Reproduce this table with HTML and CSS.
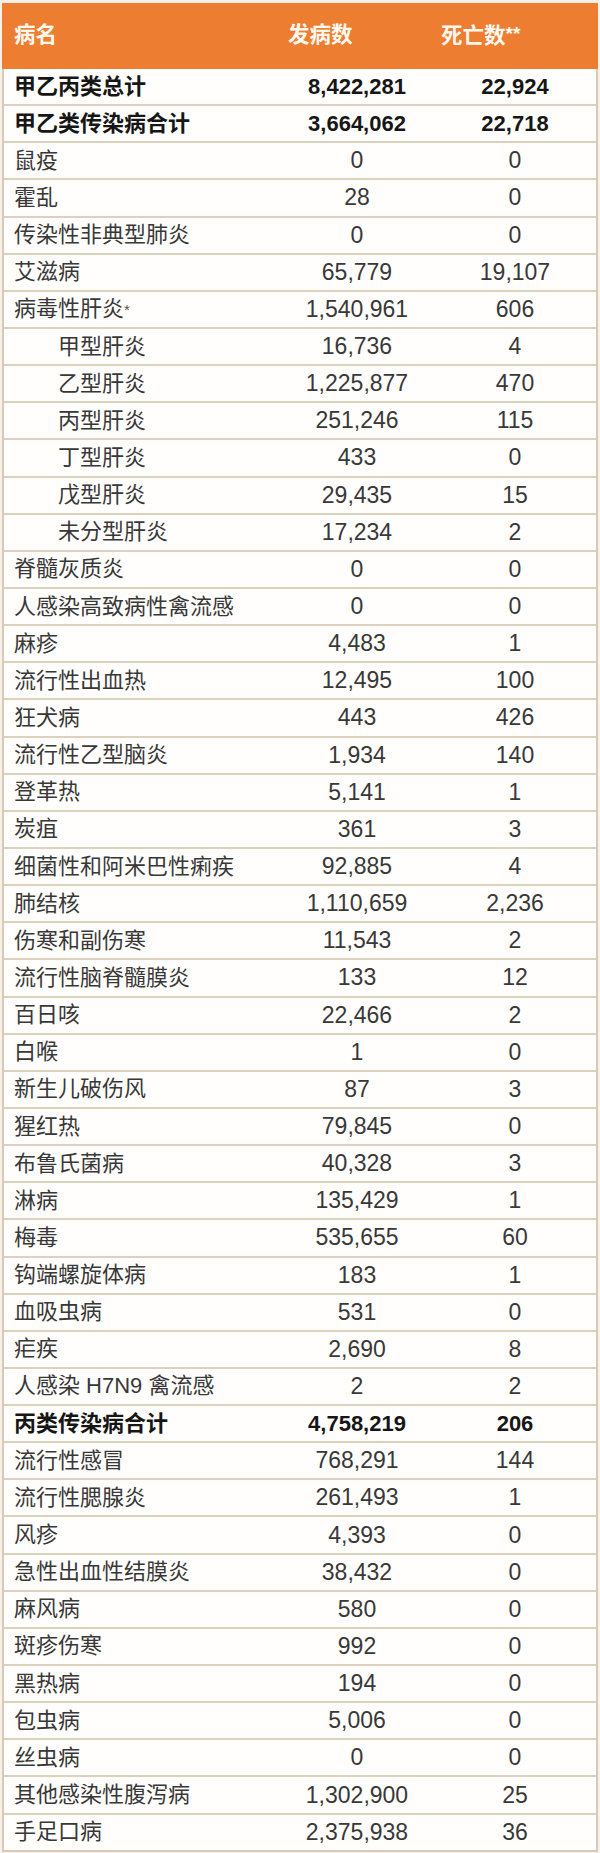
FILE: index.html
```html
<!DOCTYPE html>
<html lang="zh-CN">
<head>
<meta charset="utf-8">
<title>甲乙丙类传染病发病数与死亡数</title>
<link rel="stylesheet" href="styles.css">
</head>
<body>
<div class="sheet">
  <div class="row head">
    <div class="c name">病名</div>
    <div class="c n1">发病数</div>
    <div class="c n2">死亡数<span class="stars">**</span></div>
  </div>
  <div class="row bold"><div class="c name">甲乙丙类总计</div><div class="c num">8,422,281</div><div class="c num">22,924</div></div>
  <div class="row bold"><div class="c name">甲乙类传染病合计</div><div class="c num">3,664,062</div><div class="c num">22,718</div></div>
  <div class="row"><div class="c name">鼠疫</div><div class="c num">0</div><div class="c num">0</div></div>
  <div class="row"><div class="c name">霍乱</div><div class="c num">28</div><div class="c num">0</div></div>
  <div class="row"><div class="c name">传染性非典型肺炎</div><div class="c num">0</div><div class="c num">0</div></div>
  <div class="row"><div class="c name">艾滋病</div><div class="c num">65,779</div><div class="c num">19,107</div></div>
  <div class="row"><div class="c name">病毒性肝炎<span class="ast">*</span></div><div class="c num">1,540,961</div><div class="c num">606</div></div>
  <div class="row sub"><div class="c name">甲型肝炎</div><div class="c num">16,736</div><div class="c num">4</div></div>
  <div class="row sub"><div class="c name">乙型肝炎</div><div class="c num">1,225,877</div><div class="c num">470</div></div>
  <div class="row sub"><div class="c name">丙型肝炎</div><div class="c num">251,246</div><div class="c num">115</div></div>
  <div class="row sub"><div class="c name">丁型肝炎</div><div class="c num">433</div><div class="c num">0</div></div>
  <div class="row sub"><div class="c name">戊型肝炎</div><div class="c num">29,435</div><div class="c num">15</div></div>
  <div class="row sub"><div class="c name">未分型肝炎</div><div class="c num">17,234</div><div class="c num">2</div></div>
  <div class="row"><div class="c name">脊髓灰质炎</div><div class="c num">0</div><div class="c num">0</div></div>
  <div class="row"><div class="c name">人感染高致病性禽流感</div><div class="c num">0</div><div class="c num">0</div></div>
  <div class="row"><div class="c name">麻疹</div><div class="c num">4,483</div><div class="c num">1</div></div>
  <div class="row"><div class="c name">流行性出血热</div><div class="c num">12,495</div><div class="c num">100</div></div>
  <div class="row"><div class="c name">狂犬病</div><div class="c num">443</div><div class="c num">426</div></div>
  <div class="row"><div class="c name">流行性乙型脑炎</div><div class="c num">1,934</div><div class="c num">140</div></div>
  <div class="row"><div class="c name">登革热</div><div class="c num">5,141</div><div class="c num">1</div></div>
  <div class="row"><div class="c name">炭疽</div><div class="c num">361</div><div class="c num">3</div></div>
  <div class="row"><div class="c name">细菌性和阿米巴性痢疾</div><div class="c num">92,885</div><div class="c num">4</div></div>
  <div class="row"><div class="c name">肺结核</div><div class="c num">1,110,659</div><div class="c num">2,236</div></div>
  <div class="row"><div class="c name">伤寒和副伤寒</div><div class="c num">11,543</div><div class="c num">2</div></div>
  <div class="row"><div class="c name">流行性脑脊髓膜炎</div><div class="c num">133</div><div class="c num">12</div></div>
  <div class="row"><div class="c name">百日咳</div><div class="c num">22,466</div><div class="c num">2</div></div>
  <div class="row"><div class="c name">白喉</div><div class="c num">1</div><div class="c num">0</div></div>
  <div class="row"><div class="c name">新生儿破伤风</div><div class="c num">87</div><div class="c num">3</div></div>
  <div class="row"><div class="c name">猩红热</div><div class="c num">79,845</div><div class="c num">0</div></div>
  <div class="row"><div class="c name">布鲁氏菌病</div><div class="c num">40,328</div><div class="c num">3</div></div>
  <div class="row"><div class="c name">淋病</div><div class="c num">135,429</div><div class="c num">1</div></div>
  <div class="row"><div class="c name">梅毒</div><div class="c num">535,655</div><div class="c num">60</div></div>
  <div class="row"><div class="c name">钩端螺旋体病</div><div class="c num">183</div><div class="c num">1</div></div>
  <div class="row"><div class="c name">血吸虫病</div><div class="c num">531</div><div class="c num">0</div></div>
  <div class="row"><div class="c name">疟疾</div><div class="c num">2,690</div><div class="c num">8</div></div>
  <div class="row"><div class="c name">人感染 H7N9 禽流感</div><div class="c num">2</div><div class="c num">2</div></div>
  <div class="row bold"><div class="c name">丙类传染病合计</div><div class="c num">4,758,219</div><div class="c num">206</div></div>
  <div class="row"><div class="c name">流行性感冒</div><div class="c num">768,291</div><div class="c num">144</div></div>
  <div class="row"><div class="c name">流行性腮腺炎</div><div class="c num">261,493</div><div class="c num">1</div></div>
  <div class="row"><div class="c name">风疹</div><div class="c num">4,393</div><div class="c num">0</div></div>
  <div class="row"><div class="c name">急性出血性结膜炎</div><div class="c num">38,432</div><div class="c num">0</div></div>
  <div class="row"><div class="c name">麻风病</div><div class="c num">580</div><div class="c num">0</div></div>
  <div class="row"><div class="c name">斑疹伤寒</div><div class="c num">992</div><div class="c num">0</div></div>
  <div class="row"><div class="c name">黑热病</div><div class="c num">194</div><div class="c num">0</div></div>
  <div class="row"><div class="c name">包虫病</div><div class="c num">5,006</div><div class="c num">0</div></div>
  <div class="row"><div class="c name">丝虫病</div><div class="c num">0</div><div class="c num">0</div></div>
  <div class="row"><div class="c name">其他感染性腹泻病</div><div class="c num">1,302,900</div><div class="c num">25</div></div>
  <div class="row"><div class="c name">手足口病</div><div class="c num">2,375,938</div><div class="c num">36</div></div>
</div>
</body>
</html>
```

FILE: styles.css
```css
html, body {
  margin: 0;
  padding: 0;
  background: #f7f1e9;
}

body {
  width: 600px;
  height: 1853px;
  overflow: hidden;
  font-family: "Liberation Sans", "Noto Sans CJK SC", sans-serif;
  color: #383838;
}

.sheet {
  margin: 3px 0 0 2px;
  width: 596px;
  display: grid;
  grid-template-rows: 66px;
  grid-auto-rows: 37.15px;
  background: #fffefc;
  border-left: 2px solid #d8cab6;
  border-right: 2px solid #d8cab6;
  box-sizing: border-box;
}

.row {
  display: grid;
  grid-template-columns: 272px 162px 1fr;
  align-items: center;
  border-bottom: 2px solid #ddd0bd;
  box-sizing: border-box;
  min-height: 0;
}

.row:last-child {
  border-bottom-color: #d8cab6;
}

.c {
  white-space: nowrap;
  line-height: 1;
}

.name {
  padding-left: 10px;
  font-size: 22px;
}

.sub .name {
  padding-left: 54px;
}

.num {
  text-align: center;
  font-size: 23px;
}

.num + .num {
  padding-right: 4px;
}

.ast {
  font-size: 15px;
  vertical-align: 1px;
  color: #555;
}

.head {
  background: #ed7d31;
  color: #fff8ee;
  font-weight: bold;
  border-bottom: none;
  margin-left: -2px;
  margin-right: -2px;
  grid-template-columns: 276px 160px 1fr;
}

.head .name {
  padding-left: 12px;
  font-size: 21.5px;
}

.head .n1 {
  padding-left: 10px;
  font-size: 21.5px;
}

.head .n2 {
  padding-left: 3px;
  font-size: 21.5px;
}

.stars {
  font-size: 19px;
  vertical-align: 3px;
}

.bold {
  font-weight: bold;
  color: #161616;
}

.bold .num {
  font-size: 22px;
}
```
